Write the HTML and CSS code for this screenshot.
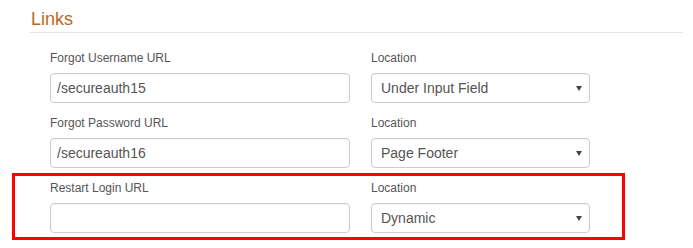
FILE: index.html
```html
<!DOCTYPE html>
<html lang="en">
<head>
    <meta charset="UTF-8">
    <meta name="viewport" content="width=device-width, initial-scale=1.0">
    <title>Links</title>
    <link rel="stylesheet" href="styles.css">
</head>
<body>
    <div class="panel">
        <h2 class="section-title">Links</h2>
        <div class="form">
            <div class="form-row">
                <div class="field">
                    <label class="label">Forgot Username URL</label>
                    <input class="input" type="text" value="/secureauth15">
                </div>
                <div class="field">
                    <label class="label">Location</label>
                    <div class="select">Under Input Field</div>
                </div>
            </div>
            <div class="form-row">
                <div class="field">
                    <label class="label">Forgot Password URL</label>
                    <input class="input" type="text" value="/secureauth16">
                </div>
                <div class="field">
                    <label class="label">Location</label>
                    <div class="select">Page Footer</div>
                </div>
            </div>
            <div class="form-row highlight">
                <div class="field">
                    <label class="label">Restart Login URL</label>
                    <input class="input" type="text" value="">
                </div>
                <div class="field">
                    <label class="label">Location</label>
                    <div class="select">Dynamic</div>
                </div>
            </div>
        </div>
    </div>
</body>
</html>
```

FILE: styles.css
```css
body {
    margin: 0;
    background: #fff;
    font-family: "Liberation Sans", Arial, sans-serif;
    color: #555;
}
.panel {
    padding: 0 10px 0 30px;
}
.section-title {
    margin: 0;
    padding: 9px 0 3px 1px;
    font-size: 18px;
    line-height: 20px;
    font-weight: normal;
    color: #b8691f;
    border-bottom: 1px solid #e5e5e5;
}
.form {
    padding: 17px 0 0 20px;
}
.form-row {
    display: grid;
    grid-template-columns: 300px 219px;
    column-gap: 21px;
    width: 540px;
    margin-bottom: 12px;
}
.field {
    display: flex;
    flex-direction: column;
}
.label {
    font-size: 12px;
    line-height: 16px;
    margin-bottom: 7px;
    color: #555;
}
.input,
.select {
    box-sizing: border-box;
    height: 30px;
    border: 1px solid #ccc;
    border-radius: 4px;
    font-family: inherit;
    font-size: 14px;
    color: #555;
    background: #fff;
    box-shadow: inset 0 1px 1px rgba(0, 0, 0, 0.04);
}
.input {
    width: 300px;
    padding: 0 6px;
    margin: 0;
    outline: none;
}
.select {
    position: relative;
    padding: 0 20px 0 9px;
    line-height: 28px;
}
.select::after {
    content: "";
    position: absolute;
    right: 7px;
    top: 12px;
    border-left: 3px solid transparent;
    border-right: 3px solid transparent;
    border-top: 5px solid #444;
}
.highlight {
    position: relative;
}
.highlight::after {
    content: "";
    position: absolute;
    top: -7px;
    left: -38px;
    right: -35px;
    bottom: -7px;
    border: 3px solid #f00;
    pointer-events: none;
}
```
